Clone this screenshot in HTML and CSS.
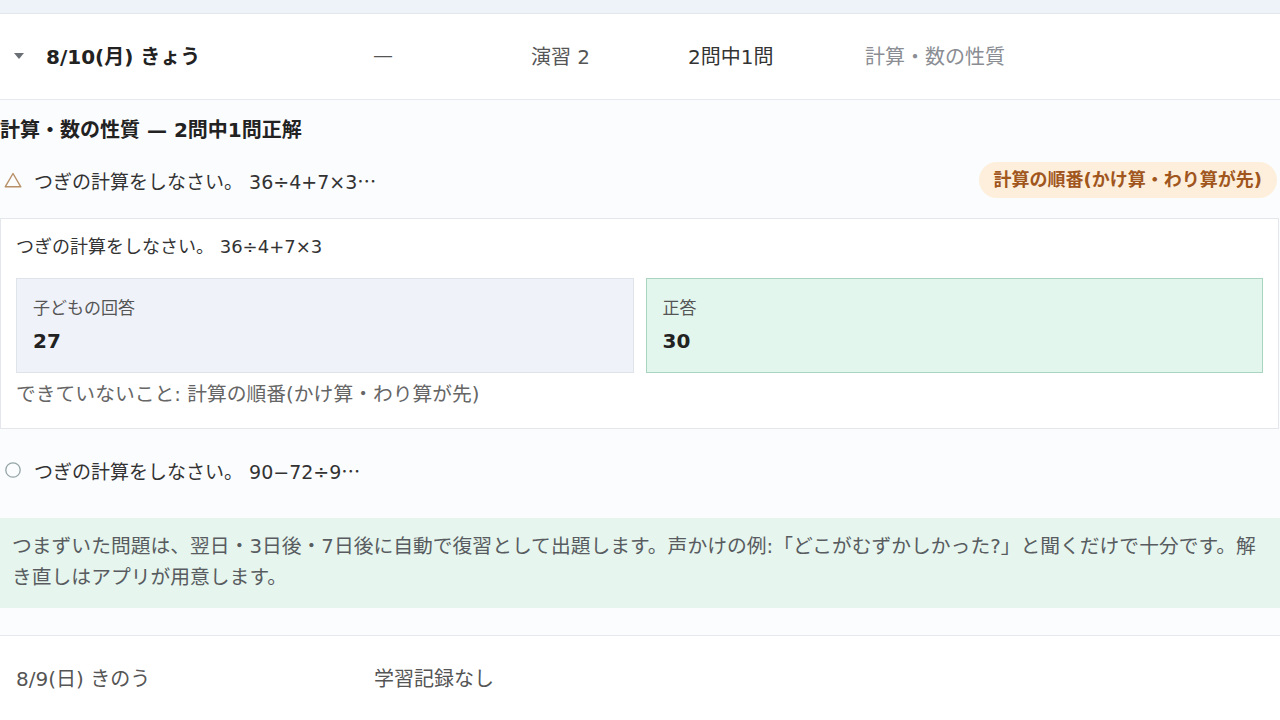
FILE: index.html
```html
<!DOCTYPE html>
<html lang="ja">
<head>
<meta charset="utf-8">
<link rel="stylesheet" href="styles.css">
</head>
<body>
<div class="topband"></div>
<div class="row row-open">
  <div class="c1"><svg class="caret" width="10" height="6" viewBox="0 0 10 6"><path d="M0 0H10L5 6Z" fill="#6b6f76"/></svg><span class="date">8/10(月) きょう</span></div>
  <div class="c2 muted">—</div>
  <div class="c3 muted">演習 2</div>
  <div class="c4">2問中1問</div>
  <div class="c5 light">計算・数の性質</div>
</div>
<div class="detail">
  <div class="title">計算・数の性質 — 2問中1問正解</div>
  <div class="prob">
    <div class="prob-left">
      <svg class="ico" width="18" height="16" viewBox="0 0 18 16"><path d="M9 1.5L16.8 14.8H1.2Z" fill="none" stroke="#b89068" stroke-width="1.4" stroke-linejoin="round"/></svg>
      <span>つぎの計算をしなさい。 36÷4+7×3<span class="ell">…</span></span>
    </div>
    <span class="badge">計算の順番(かけ算・わり算が先)</span>
  </div>
  <div class="card">
    <div class="q">つぎの計算をしなさい。 36÷4+7×3</div>
    <div class="answers">
      <div class="ans ans-child">
        <div class="lbl">子どもの回答</div>
        <div class="val">27</div>
      </div>
      <div class="ans ans-right">
        <div class="lbl">正答</div>
        <div class="val">30</div>
      </div>
    </div>
    <div class="note">できていないこと: 計算の順番(かけ算・わり算が先)</div>
  </div>
  <div class="prob prob2">
    <div class="prob-left">
      <svg class="ico" width="18" height="18" viewBox="0 0 18 18"><circle cx="9" cy="9" r="7.2" fill="none" stroke="#95a5a6" stroke-width="1.3"/></svg>
      <span>つぎの計算をしなさい。 90−72÷9<span class="ell">…</span></span>
    </div>
  </div>
  <div class="info">つまずいた問題は、翌日・3日後・7日後に自動で復習として出題します。声かけの例:「どこがむずかしかった?」と聞くだけで十分です。解き直しはアプリが用意します。</div>
</div>
<div class="row row-closed">
  <div class="c1"><span class="date2">8/9(日) きのう</span></div>
  <div class="c2 muted">学習記録なし</div>
</div>
</body>
</html>
```
FILE: styles.css
```css
* { box-sizing: border-box; }
html, body { margin: 0; padding: 0; }
body {
  width: 1280px;
  height: 720px;
  overflow: hidden;
  background: #ffffff;
  font-family: "DejaVu Sans", "Noto Sans CJK JP", sans-serif;
  color: #333;
}
.topband {
  height: 14px;
  background: #eef2f9;
  border-bottom: 1px solid #e3e6ec;
}
.row {
  height: 86px;
  display: grid;
  grid-template-columns: 359px 158px 157px 177px 1fr;
  align-items: center;
  font-size: 20px;
  background: #fff;
  padding-bottom: 3px;
}
.row-open { padding-left: 14px; border-bottom: 1px solid #e5e8ee; }
.row-closed { padding-left: 16px; grid-template-columns: 358px 1fr; padding-bottom: 4px; }
.c1 { display: flex; align-items: center; }
.caret { margin-right: 22px; margin-top: 2px; }
.date { font-weight: 700; color: #222; }
.date2 { color: #555; }
.muted { color: #555; }
.c4 { color: #333; }
.light { color: #8a8d93; }

.detail {
  background: #fbfcfe;
  padding: 17px 0 27px 0;
  border-bottom: 1px solid #e5e8ee;
}
.title {
  font-size: 20px;
  font-weight: 700;
  color: #222;
  line-height: 26px;
}
.prob {
  margin-top: 19px;
  height: 36px;
  display: flex;
  align-items: center;
  justify-content: space-between;
  padding-right: 3px;
}
.prob-left {
  display: flex;
  align-items: center;
  gap: 12px;
  font-size: 19px;
  color: #333;
  padding-left: 4px;
}
.ell { font-family: "Noto Sans CJK JP", sans-serif; }
.badge {
  height: 36px;
  line-height: 36px;
  padding: 0 15px;
  border-radius: 18px;
  background: #fdefdc;
  color: #a0561c;
  font-weight: 700;
  font-size: 18px;
}
.card {
  margin-top: 20px;
  background: #fff;
  border: 1px solid #e3e6ea;
  padding: 15px 15px 20px 15px;
  margin-right: 1px;
}
.q { font-size: 18px; line-height: 26px; color: #333; }
.answers {
  margin-top: 18px;
  display: grid;
  grid-template-columns: 1fr 1fr;
  gap: 12px;
}
.ans {
  height: 95px;
  padding: 18px 16px 0 16px;
  border: 1px solid #dfe3ea;
}
.ans-child { background: #eff2f9; }
.ans-right { background: #e3f6ee; border-color: #a9d4bf; }
.lbl { font-size: 17px; line-height: 22px; color: #555; }
.val { font-size: 20px; line-height: 28px; margin-top: 8px; color: #222; font-weight: 700; }
.note { margin-top: 9px; font-size: 19.8px; line-height: 26px; color: #666; }
.prob2 { margin-top: 23px; }
.info {
  margin-top: 30px;
  background: #e6f5ee;
  padding: 13px 12px 15px 12px;
  font-size: 19.8px;
  line-height: 31px;
  color: #585c60;
}
```
